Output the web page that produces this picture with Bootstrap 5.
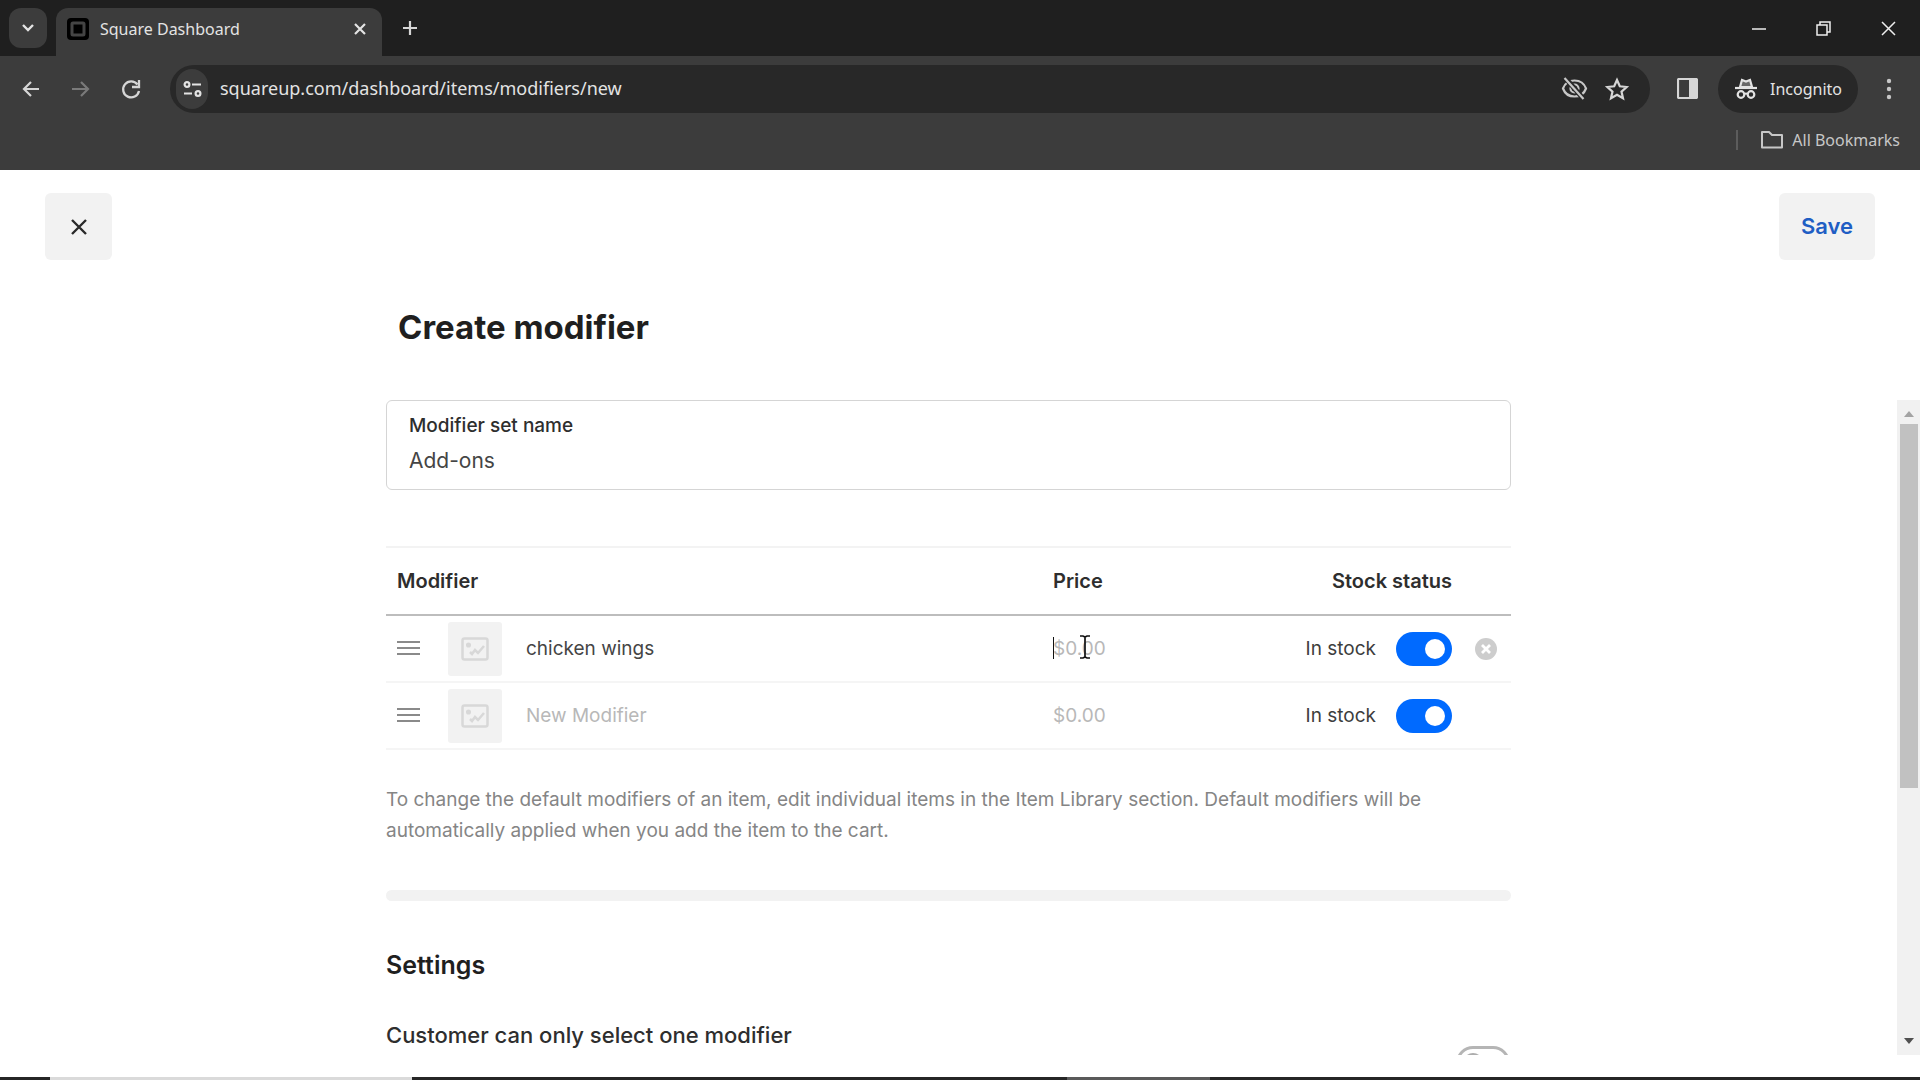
<!DOCTYPE html>
<html lang="en">
<head>
<meta charset="utf-8">
<meta name="viewport" content="width=device-width, initial-scale=1">
<title>Square Dashboard</title>
<link href="https://cdn.jsdelivr.net/npm/bootstrap@5.3.0/dist/css/bootstrap.min.css" rel="stylesheet">
<style>
  body { font-family: Inter, "Liberation Sans", sans-serif; color: #1f1f1f; background: #fff; }
  button { font-family: inherit; }
  svg { display: block; flex: none; }
  .bare { background: none; border: 0; padding: 0; color: inherit; }

  /* browser frame */
  .frame { font-family: "Noto Sans", "Open Sans", sans-serif; background: #3c3c3c; color: #e3e3e3; }
  .tab-strip { background: #1f1f1f; height: 56px; }
  .tab-search { width: 38px; height: 40px; border-radius: 12px; background: #3c3c3c; margin: 8px 9px; }
  .tab-item { width: 326px; height: 48px; border-radius: 12px 12px 0 0; background: #3c3c3c; padding: 0 15px 6px 11px; gap: 11px; font-size: 16px; }
  .tab-new { padding: 0 0 0 20px; }
  .win-controls { gap: 50px; padding-right: 24px; }
  .tool-row { height: 65px; padding: 0 20px; }
  .nav-set { gap: 28px; margin-right: 28px; }
  .omni { background: #282828; height: 48px; border-radius: 24px; padding: 0 20px 0 6px; }
  .site-info { width: 32px; height: 40px; border-radius: 16px; background: #3c3c3c; }
  .omni input { font-size: 18px; color: #e3e3e3; background: none; border: 0; outline: 0; margin-left: 12px; padding: 0; }
  .side-panel { margin-left: 27px; }
  .incog { background: #282828; height: 48px; border-radius: 24px; padding: 0 16px; gap: 12px; font-size: 16px; margin: 0 20px; }
  .marks-row { height: 49px; padding: 0 20px 12px; font-size: 16px; color: #c7c7c7; }
  .marks-rule { width: 2px; height: 20px; background: #5c5c5c; margin-right: 22px; }

  /* page */
  .top-actions { padding: 23px 45px 0; }
  .btn-flat { background: #f2f2f2; border: 0; border-radius: 6px; height: 67px; font-size: 22px; font-weight: 600; color: #1f5ec4; padding: 0 22px; }
  .btn-close-page { width: 67px; padding: 0; color: #1f1f1f; }
  .col-main { width: 1125px; max-width: 100%; margin: 0 386px; }
  .page-title { font-size: 33px; line-height: 40px; font-weight: 700; padding: 47px 12px 53px; margin: 0; }
  .scroller { height: 655px; overflow: hidden; }
  .name-field { border: 1px solid #d5d5d5; border-radius: 6px; height: 90px; padding: 10px 22px; }
  .name-field label { font-size: 19px; line-height: 30px; font-weight: 500; color: #2e2e2e; }
  .name-field input { font-size: 21px; line-height: 40px; height: 40px; }
  .text-entry { border: 0; padding: 0; background: none; width: 100%; color: #454545; outline: 0; }
  .text-entry::placeholder { color: #b8b8b8; opacity: 1; }
  .mod-table { table-layout: fixed; width: 100%; border-top: 2px solid #f3f3f3; margin-top: 56px; font-size: 19px; }
  .mod-table th { height: 68px; font-size: 20px; font-weight: 600; padding: 0 11px; border-bottom: 2px solid #bdbdbd; color: #2e2e2e; }
  .mod-table td { height: 67px; padding: 0; border-bottom: 2px solid #f5f5f5; }
  .mod-table th:nth-child(3) { text-align: right; padding-right: 59px; }
  .mod-table .text-entry, .stock-label { padding-top: 2px; }
  .c-price { width: 200px; }
  .c-stock { width: 269px; }
  .mod-table .pr { padding-left: 11px; }
  .thumb { flex: none; width: 54px; height: 54px; background: #f2f2f2; border-radius: 3px; }
  .stock-label { color: #3d3d3d; margin-right: 20px; }
  .toggle { appearance: none; flex: none; width: 56px; height: 34px; border-radius: 17px; background: #006aff; margin: 0; padding: 7px 7px 7px 29px; }
  .toggle::before { content: ""; display: block; width: 20px; height: 20px; border-radius: 50%; background: #fff; }
  .toggle.off { width: 54px; background: #fff; border: 3px solid #b5b5b5; padding: 4px; }
  .toggle.off::before { background: #adadad; }
  .clear-slot { width: 59px; padding-left: 22px; }
  .cursor-wrap { position: relative; }
  .caret-bar { position: absolute; left: 0; top: 4px; width: 1px; height: 22px; background: #111; }
  .ibeam { position: absolute; left: 26px; top: 2px; }
  .hint { font-size: 19px; line-height: 31px; color: #858585; margin: 34px 0 44px; }
  .section-bar { height: 11px; border-radius: 6px; background: #f2f2f2; }
  .settings-title { font-size: 25px; line-height: 32px; font-weight: 600; margin: 48px 0 0; }
  .setting-row { margin-top: 38px; }
  .setting-row label { font-size: 22px; line-height: 32px; font-weight: 500; color: #2e2e2e; }
  .setting-row .toggle { margin: 27px 1px 0 0; }
  .rail { width: 23px; background: #f1f1f1; padding: 10px 3px; }
  .rail-thumb { width: 18px; height: 364px; background: #c1c1c1; margin: 7px 0 auto; }
  .task-line { height: 3px; margin-top: 22px; background: #262626; }
  .task-on { width: 362px; margin-left: 50px; background: #dadada; }
  .task-mid { width: 143px; margin-left: 655px; background: #5a5a5a; }
</style>
</head>
<body class="overflow-hidden">
<header class="frame">
  <div class="tab-strip d-flex">
    <button class="bare tab-search d-flex align-items-center justify-content-center" aria-label="Search tabs"><svg width="14" height="10" viewBox="0 0 14 10" fill="none" stroke="#e3e3e3" stroke-width="2.4"><path d="M2 2l5 5 5-5"/></svg></button>
    <div class="tab-item d-flex align-items-center mt-auto">
      <svg width="22" height="22" viewBox="0 0 22 22"><rect width="22" height="22" rx="4" fill="#000"/><rect x="5" y="5" width="12" height="12" rx="1" fill="none" stroke="#444" stroke-width="3"/></svg>
      <span>Square Dashboard</span>
      <button class="bare ms-auto" aria-label="Close tab"><svg width="14" height="14" viewBox="0 0 14 14" stroke="#e3e3e3" stroke-width="2.2"><path d="M2 2l10 10M12 2L2 12"/></svg></button>
    </div>
    <button class="bare tab-new" aria-label="New tab"><svg width="16" height="16" viewBox="0 0 16 16" stroke="#d6d6d6" stroke-width="2.2"><path d="M8 1v14M1 8h14"/></svg></button>
    <div class="win-controls d-flex align-items-center ms-auto">
      <button class="bare" aria-label="Minimize"><svg width="14" height="14" viewBox="0 0 14 14" stroke="#eee" stroke-width="1.5"><path d="M0 8h14"/></svg></button>
      <button class="bare" aria-label="Restore"><svg width="15" height="15" viewBox="0 0 15 15" fill="none" stroke="#eee" stroke-width="1.5"><path d="M1 4h10v10H1zM4 4V1h10v10h-3"/></svg></button>
      <button class="bare" aria-label="Close"><svg width="15" height="15" viewBox="0 0 15 15" stroke="#eee" stroke-width="1.5"><path d="M1 1l13 13M14 1L1 14"/></svg></button>
    </div>
  </div>
  <div class="tool-row d-flex align-items-center">
    <div class="nav-set d-flex align-items-center">
      <button class="bare" aria-label="Back"><svg width="22" height="20" viewBox="0 0 22 20" fill="none" stroke="#d6d6d6" stroke-width="2.2"><path d="M19 10H4M11 3l-7 7 7 7"/></svg></button>
      <button class="bare" aria-label="Forward"><svg width="22" height="20" viewBox="0 0 22 20" fill="none" stroke="#7a7a7a" stroke-width="2.2"><path d="M2 10h16M11 3l7 7-7 7"/></svg></button>
      <button class="bare" aria-label="Reload"><svg width="22" height="22" viewBox="0 0 22 22" fill="none" stroke="#d6d6d6" stroke-width="2.3"><path d="M17.500 6.500A8 8 0 1 0 19 13M19 2v7h-7"/></svg></button>
    </div>
    <div class="omni d-flex align-items-center flex-grow-1">
      <button class="bare site-info d-flex align-items-center justify-content-center" aria-label="Site information"><svg width="19" height="16" viewBox="0 0 19 16" fill="none" stroke="#e3e3e3" stroke-width="2.2"><circle cx="4" cy="3.500" r="2.400"/><path d="M9 3.500h9M1 12.500h8"/><circle cx="15" cy="12.500" r="2.400"/></svg></button>
      <input class="flex-grow-1" type="text" aria-label="Address" value="squareup.com/dashboard/items/modifiers/new">
      <svg width="27" height="23" viewBox="0 0 27 23" fill="none" stroke="#c7c7c7" stroke-width="2.200"><path d="M2 11.500C4 6 8.500 3.500 13.500 3.500S23 6 25 11.500C23 17 18.500 19.500 13.500 19.500S4 17 2 11.500z"/><circle cx="13.500" cy="11.500" r="4"/><path d="M4.500 1l18 21" stroke="#282828" stroke-width="5"/><path d="M3.500 1l19 21"/></svg>
      <svg class="ms-3" width="26" height="24" viewBox="0 0 26 24" fill="none" stroke="#d6d6d6" stroke-width="2.200"><path d="M13 3l2.800 6.300 6.800.7-5.100 4.600 1.500 6.700-6-3.500-6 3.500 1.500-6.700L3.400 10l6.800-.7z"/></svg>
    </div>
    <button class="bare side-panel" aria-label="Side panel"><svg width="21" height="21" viewBox="0 0 21 21"><rect x="1" y="1" width="19" height="19" rx="1" fill="none" stroke="#d6d6d6" stroke-width="2.200"/><path d="M12 1h8v19h-8z" fill="#d6d6d6"/></svg></button>
    <button class="bare incog d-flex align-items-center" aria-label="Incognito"><svg width="24" height="22" viewBox="0 0 24 22" fill="none" stroke="#e3e3e3" stroke-width="2.200"><path d="M1 10h22"/><path d="M6 9l2-7 4 1.500L16 2l2 7z" fill="#e3e3e3" fill-opacity=".35"/><circle cx="7" cy="16.500" r="3.300"/><circle cx="17" cy="16.500" r="3.300"/><path d="M10 16q2-1 4 0"/></svg><span>Incognito</span></button>
    <button class="bare" aria-label="Menu"><svg width="22" height="22" viewBox="0 0 22 22" fill="#c7c7c7"><circle cx="11" cy="3" r="2.200"/><circle cx="11" cy="11" r="2.200"/><circle cx="11" cy="19" r="2.200"/></svg></button>
  </div>
  <div class="marks-row d-flex align-items-center justify-content-end">
    <span class="marks-rule"></span>
    <svg width="24" height="20" viewBox="0 0 24 20" fill="none" stroke="#c7c7c7" stroke-width="2"><path d="M2 17.500V2h7l3 3h10v12.500z" stroke-linejoin="round"/></svg>
    <a href="#" class="text-reset text-decoration-none ms-2">All Bookmarks</a>
  </div>
</header>

<main>
  <div class="top-actions d-flex justify-content-between">
    <button class="btn btn-flat btn-close-page d-flex align-items-center justify-content-center" aria-label="Close"><svg width="18" height="18" viewBox="0 0 18 18" stroke="#2a2a2a" stroke-width="2.400"><path d="M2 2l14 14M16 2L2 16"/></svg></button>
    <button class="btn btn-flat">Save</button>
  </div>
  <div class="col-main"><h1 class="page-title">Create modifier</h1></div>
  <div class="scroller d-flex justify-content-between">
    <div class="col-main">
      <div class="name-field">
        <label for="setName" class="d-block">Modifier set name</label>
        <input id="setName" class="text-entry d-block" type="text" value="Add-ons">
      </div>
      <table class="mod-table">
        <colgroup><col><col class="c-price"><col class="c-stock"></colgroup>
        <thead><tr><th scope="col">Modifier</th><th scope="col">Price</th><th scope="col">Stock status</th></tr></thead>
        <tbody>
          <tr>
            <td><div class="d-flex align-items-center">
              <svg width="46" height="20" viewBox="0 0 46 20" stroke="#8a8a8a" stroke-width="2"><path d="M11 3h23M11 9h23M11 15h23"/></svg>
              <span class="thumb d-flex align-items-center justify-content-center ms-3 me-4"><svg width="28" height="24" viewBox="0 0 28 24" fill="none" stroke="#d8d8d8" stroke-width="2.500"><rect x="1.500" y="1.500" width="25" height="21" rx="2"/><path d="M9 15l2 2 3-4 3 3 6-7"/><circle cx="7.500" cy="8" r="1.300" fill="#d8d8d8"/></svg></span>
              <input class="text-entry" type="text" aria-label="Modifier name" value="chicken wings">
            </div></td>
            <td class="pr"><div class="cursor-wrap"><input class="text-entry d-block" type="text" aria-label="Price" placeholder="$0.00"><span class="caret-bar"></span><svg class="ibeam" width="12" height="24" viewBox="0 0 12 24" fill="none" stroke="#111" stroke-width="1.700"><path d="M1 1h3l2 1 2-1h3M6 2v20M1 23h3l2-1 2 1h3"/></svg></div></td>
            <td><div class="d-flex align-items-center justify-content-end"><label class="stock-label" for="stock1">In stock</label><input id="stock1" class="toggle" type="checkbox" checked>
              <span class="clear-slot d-flex"><button class="bare" aria-label="Remove modifier"><svg width="24" height="24" viewBox="0 0 24 24"><circle cx="12" cy="12" r="11" fill="#cdcdcd"/><path d="M8 8l8 8M16 8l-8 8" stroke="#fff" stroke-width="2.800"/></svg></button></span></div></td>
          </tr>
          <tr>
            <td><div class="d-flex align-items-center">
              <svg width="46" height="20" viewBox="0 0 46 20" stroke="#8a8a8a" stroke-width="2"><path d="M11 3h23M11 9h23M11 15h23"/></svg>
              <span class="thumb d-flex align-items-center justify-content-center ms-3 me-4"><svg width="28" height="24" viewBox="0 0 28 24" fill="none" stroke="#d8d8d8" stroke-width="2.500"><rect x="1.500" y="1.500" width="25" height="21" rx="2"/><path d="M9 15l2 2 3-4 3 3 6-7"/><circle cx="7.500" cy="8" r="1.300" fill="#d8d8d8"/></svg></span>
              <input class="text-entry" type="text" aria-label="Modifier name" placeholder="New Modifier">
            </div></td>
            <td class="pr"><input class="text-entry d-block" type="text" aria-label="Price" placeholder="$0.00"></td>
            <td><div class="d-flex align-items-center justify-content-end"><label class="stock-label" for="stock2">In stock</label><input id="stock2" class="toggle" type="checkbox" checked><span class="clear-slot"></span></div></td>
          </tr>
        </tbody>
      </table>
      <p class="hint">To change the default modifiers of an item, edit individual items in the Item Library section. Default modifiers will be automatically applied when you add the item to the cart.</p>
      <div class="section-bar"></div>
      <h2 class="settings-title">Settings</h2>
      <div class="setting-row d-flex justify-content-between">
        <label for="onlyOne">Customer can only select one modifier</label>
        <input id="onlyOne" class="toggle off" type="checkbox">
      </div>
    </div>
    <div class="rail d-flex flex-column align-items-center" aria-hidden="true">
      <svg width="10" height="7" viewBox="0 0 10 7"><path d="M0 7l5-6 5 6z" fill="#a3a3a3"/></svg>
      <div class="rail-thumb"></div>
      <svg width="10" height="7" viewBox="0 0 10 7"><path d="M0 0l5 6 5-6z" fill="#505050"/></svg>
    </div>
  </div>
</main>
<footer class="task-line d-flex" aria-hidden="true"><span class="task-on"></span><span class="task-mid"></span></footer>
<script src="https://cdn.jsdelivr.net/npm/bootstrap@5.3.0/dist/js/bootstrap.bundle.min.js"></script>
</body>
</html>
